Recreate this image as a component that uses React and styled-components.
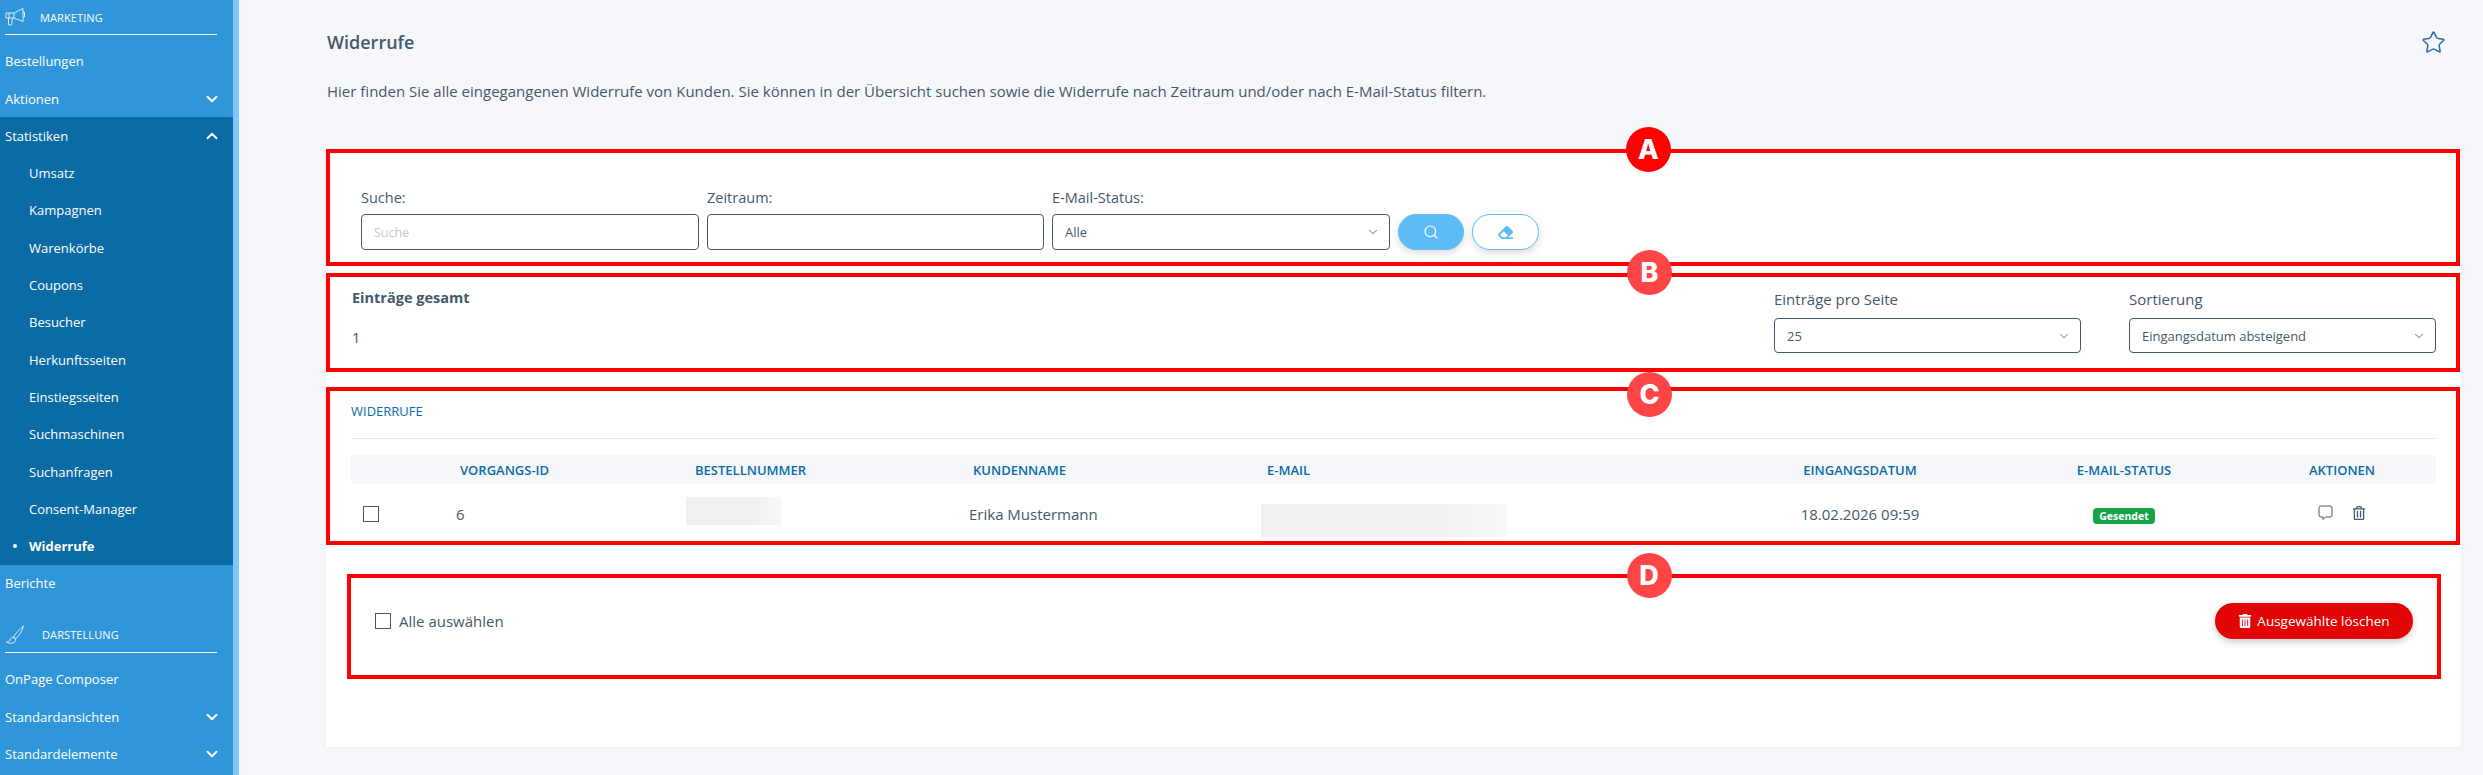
import React from 'react';
import styled, { createGlobalStyle } from 'styled-components';
import { ChevronDown, ChevronUp, Search, Star } from 'lucide-react';
import { FaEraser, FaRegTrashAlt, FaTrashAlt } from 'react-icons/fa';

const GlobalStyle = createGlobalStyle`
  html, body {
    margin: 0;
    height: 100%;
    overflow: hidden;
    background: #f5f7fb;
    color: #44596b;
    font-family: "Open Sans", "Noto Sans", sans-serif;
    font-size: 14px;
  }
  * { box-sizing: border-box; }
`;

const Shell = styled.div`
  display: flex;
  height: 775px;
  overflow: hidden;
`;

// Sidebar
const Sidebar = styled.nav`
  flex: 0 0 239px;
  height: 100%;
  overflow: hidden;
  background: #3096da;
  border-right: 6px solid #7fc8ff;
  color: #fff;
`;

const GroupHead = styled.div`
  display: flex;
  align-items: center;
  width: 212px;
  height: ${(p) => p.$height}px;
  margin: ${(p) => p.$top}px 0 7.6px 5px;
  border-bottom: 1px solid #fff;
  font-size: 11px;
  letter-spacing: 0.1px;
  span { margin-left: ${(p) => p.$gap}px; }
  svg { flex: none; }
`;

const NavRow = styled.div`
  display: flex;
  align-items: center;
  justify-content: space-between;
  height: 37.3px;
  padding: 0 12px 0 ${(p) => (p.$sub ? 29 : 5)}px;
  font-size: 13px;
  font-weight: ${(p) => (p.$current ? 700 : 400)};
  position: relative;
`;

const Bullet = styled.i`
  position: absolute;
  left: 13px;
  top: 50%;
  width: 4px;
  height: 4px;
  margin-top: -2px;
  border-radius: 50%;
  background: #fff;
`;

const ActiveBlock = styled.div`
  background: #0b6ba5;
`;

// Main area
const Main = styled.main`
  flex: 1;
  min-width: 0;
  padding: 0 22px 0 87px;
`;

const TitleRow = styled.div`
  display: flex;
  align-items: center;
  justify-content: space-between;
  height: 42px;
  margin-top: 21px;
  padding: 0 15px 0 1px;
  color: #356d9e;
`;

const Title = styled.h1`
  margin: 0;
  font-size: 18px;
  font-weight: 600;
  color: #44596b;
`;

const Intro = styled.p`
  margin: 18px 0 0;
  padding-left: 1px;
  font-size: 15px;
  line-height: 20px;
  height: 68px;
`;

const Card = styled.div`
  height: 598px;
  background: #fff;
  box-shadow: 0 1px 6px rgba(0, 0, 0, 0.03);
`;

const Marked = styled.section`
  position: relative;
  margin: ${(p) => p.$margin};
  border: 4px solid #f00;
`;

const Letter = styled.b`
  position: absolute;
  left: ${(p) => p.$left}px;
  top: ${(p) => p.$top}px;
  z-index: 2;
  display: flex;
  align-items: center;
  justify-content: center;
  width: 45px;
  height: 45px;
  border-radius: 50%;
  background: ${(p) => (p.$solid ? '#f00' : '#ff4545')};
  color: #fff;
  font-family: Inter, "Liberation Sans", sans-serif;
  font-size: 27px;
  font-weight: 800;
`;

const FilterBar = styled.div`
  display: flex;
  align-items: flex-end;
  gap: 8px;
  padding: 35px 0 12px 31px;
`;

const Field = styled.label`
  display: flex;
  flex-direction: column;
  width: ${(p) => p.$width}px;
`;

const FieldLabel = styled.span`
  height: 20px;
  margin-bottom: ${(p) => p.$gap}px;
  font-size: ${(p) => p.$size}px;
  line-height: 20px;
`;

const TextInput = styled.input`
  width: 100%;
  height: 36px;
  padding: 0 12px;
  border: 1px solid #44596b;
  border-radius: 4px;
  background: #fff;
  font: 12.5px "Open Sans", sans-serif;
  color: #44596b;
  outline: none;
  &::placeholder { color: #c3c8cc; opacity: 1; }
`;

const SelectWrap = styled.div`
  position: relative;
  height: ${(p) => p.$height}px;
  svg {
    position: absolute;
    right: 10px;
    top: 50%;
    margin-top: -7px;
    pointer-events: none;
  }
`;

const Select = styled.select`
  appearance: none;
  width: 100%;
  height: 100%;
  padding: 0 30px 0 12px;
  border: 1px solid #44596b;
  border-radius: 4px;
  background: #fff;
  font: 13px "Open Sans", sans-serif;
  color: #44596b;
  outline: none;
`;

const PillButton = styled.button`
  display: flex;
  align-items: center;
  justify-content: center;
  height: 36px;
  width: ${(p) => p.$width}px;
  border-radius: 18px;
  border: 1px solid #5dbcf8;
  background: ${(p) => (p.$outline ? '#fff' : '#5dbcf8')};
  color: ${(p) => (p.$outline ? '#5dbcf8' : '#fff')};
  box-shadow: 0 3px 7px rgba(0, 0, 0, 0.14);
  padding: 0;
`;

const SummaryBar = styled.div`
  display: flex;
  justify-content: space-between;
  height: 91px;
  padding: 0 20px 0 22px;
`;

const Total = styled.div`
  padding-top: 11px;
  strong {
    display: block;
    height: 20px;
    font-size: 14.5px;
    font-weight: 700;
    line-height: 20px;
  }
  p {
    margin: 20px 0 0;
    font-size: 14.5px;
    line-height: 20px;
  }
`;

const PageOptions = styled.div`
  display: flex;
  gap: 48px;
  padding-top: 12px;
`;

const TableHead = styled.h2`
  height: 48px;
  margin: 0 0 16px;
  padding-top: 10px;
  border-bottom: 1px solid #e6e8ee;
  color: #0b6ba5;
  font-size: 13px;
  font-weight: 400;
  line-height: 20px;
`;

const TableWrap = styled.div`
  padding: 0 20px 0 21px;
`;

const Table = styled.table`
  width: 100%;
  table-layout: fixed;
  border-collapse: collapse;
`;

const Th = styled.th`
  height: 29px;
  padding: 0 ${(p) => p.$right || 0}px 0 ${(p) => p.$inset || 0}px;
  background: #f5f7fb;
  color: #0b6ba5;
  font-size: 13px;
  font-weight: 600;
  text-align: ${(p) => p.$align || 'left'};
  text-transform: uppercase;
`;

const Td = styled.td`
  height: 57px;
  padding: 3px ${(p) => p.$right || 0}px 0 ${(p) => p.$inset || 0}px;
  font-size: 15px;
  text-align: ${(p) => p.$align || 'left'};
  vertical-align: middle;
`;

const Tick = styled.input.attrs({ type: 'checkbox' })`
  appearance: none;
  display: block;
  flex: none;
  width: 16px;
  height: 16px;
  margin: ${(p) => p.$margin || 0};
  border: 1px solid #44596b;
  background: #fff;
`;

const Redacted = styled.span`
  display: block;
  width: ${(p) => p.$width}px;
  height: ${(p) => p.$height}px;
  margin: ${(p) => p.$margin};
  background: linear-gradient(90deg, #eef0f2 0%, #eef0f2 70%, #f6f7f9 100%);
`;

const StatusTag = styled.span`
  display: inline-block;
  width: 62px;
  height: 16px;
  border-radius: 4px;
  background: #16a34a;
  color: #fff;
  font-size: 10.5px;
  font-weight: 700;
  line-height: 16px;
  text-align: center;
  vertical-align: middle;
`;

const RowActions = styled.div`
  display: flex;
  justify-content: center;
  align-items: center;
  gap: 19px;
  margin-top: -3px;
  color: #44596b;
`;

const BulkBar = styled.div`
  display: flex;
  align-items: center;
  justify-content: space-between;
  height: 97px;
  padding: 0 24px 11px 24px;
`;

const SelectAll = styled.label`
  display: flex;
  align-items: center;
  gap: 8px;
  font-size: 15px;
`;

const DeleteButton = styled.button`
  display: flex;
  align-items: center;
  justify-content: center;
  gap: 5px;
  width: 198px;
  height: 36px;
  border: 0;
  border-radius: 18px;
  background: #e10505;
  color: #fff;
  font: 13.5px "Open Sans", sans-serif;
  box-shadow: 0 3px 7px rgba(0, 0, 0, 0.2);
`;

const MegaphoneIcon = () => (
  <svg width="20" height="20" viewBox="0 0 20 20" fill="none" stroke="#fff" strokeWidth="0.8">
    <path d="M1 6h8l9-4.500v13L9 11H1z" />
    <path d="M3.500 11v7h3l1-7M18 5h1.500v5H18M4 6v5M9 6v5" />
  </svg>
);

const BrushIcon = () => (
  <svg width="20" height="20" viewBox="0 0 20 20" fill="none" stroke="#fff" strokeWidth="0.8">
    <path d="M18.500 1C15 4 11 8 8.500 12l2 2C14 11 17.500 6 18.500 1z" />
    <path d="M8.500 12c-3 .2-3.500 3-4 4-.4.8-2 1-3 1 1.500 1.600 5.500 1.500 7.500.5 1.400-.8 1.800-2.500 1.500-3.500z" />
  </svg>
);

const CommentIcon = () => (
  <svg width="15" height="16" viewBox="0 0 15 16" fill="none" stroke="currentColor" strokeWidth="1">
    <path d="M3 1h9a2 2 0 0 1 2 2v7a2 2 0 0 1-2 2H7.500L5 14.500V12H3a2 2 0 0 1-2-2V3a2 2 0 0 1 2-2z" />
  </svg>
);

const statsLinks = ['Umsatz', 'Kampagnen', 'Warenkörbe', 'Coupons', 'Besucher', 'Herkunftsseiten', 'Einstiegsseiten', 'Suchmaschinen', 'Suchanfragen', 'Consent-Manager'];

const Dropdown = ({ value, height }) => (
  <SelectWrap $height={height}>
    <Select defaultValue={value}>
      <option>{value}</option>
    </Select>
    <ChevronDown size={14} strokeWidth={1.5} />
  </SelectWrap>
);

const App = () => (
  <Shell>
    <GlobalStyle />
    <Sidebar>
      <GroupHead $height={35} $top={0} $gap={15}>
        <MegaphoneIcon />
        <span>MARKETING</span>
      </GroupHead>
      <NavRow>Bestellungen</NavRow>
      <NavRow>
        Aktionen
        <ChevronDown size={18} strokeWidth={2.5} />
      </NavRow>
      <ActiveBlock>
        <NavRow>
          Statistiken
          <ChevronUp size={18} strokeWidth={2.5} />
        </NavRow>
        {statsLinks.map((link) => (
          <NavRow $sub key={link}>{link}</NavRow>
        ))}
        <NavRow $sub $current>
          <Bullet />
          Widerrufe
        </NavRow>
      </ActiveBlock>
      <NavRow>Berichte</NavRow>
      <GroupHead $height={36} $top={15} $gap={17}>
        <BrushIcon />
        <span>DARSTELLUNG</span>
      </GroupHead>
      <NavRow>OnPage Composer</NavRow>
      <NavRow>
        Standardansichten
        <ChevronDown size={18} strokeWidth={2.5} />
      </NavRow>
      <NavRow>
        Standardelemente
        <ChevronDown size={18} strokeWidth={2.5} />
      </NavRow>
    </Sidebar>

    <Main>
      <TitleRow>
        <Title>Widerrufe</Title>
        <Star size={25} strokeWidth={1.5} />
      </TitleRow>
      <Intro>
        Hier finden Sie alle eingegangenen Widerrufe von Kunden. Sie können in der Übersicht suchen sowie die Widerrufe nach Zeitraum und/oder nach E-Mail-Status filtern.
      </Intro>

      <Card>
        <Marked $margin="0 1px 7px 0">
          <Letter $solid $left={1296} $top={-26.5}>A</Letter>
          <FilterBar>
            <Field $width={338}>
              <FieldLabel $size={14.5} $gap={6}>Suche:</FieldLabel>
              <TextInput placeholder="Suche" />
            </Field>
            <Field $width={337}>
              <FieldLabel $size={14.5} $gap={6}>Zeitraum:</FieldLabel>
              <TextInput />
            </Field>
            <Field $width={338}>
              <FieldLabel $size={14.5} $gap={6}>E-Mail-Status:</FieldLabel>
              <Dropdown value="Alle" height={36} />
            </Field>
            <PillButton $width={66}>
              <Search size={16} strokeWidth={1.75} />
            </PillButton>
            <PillButton $outline $width={67}>
              <FaEraser size={15} />
            </PillButton>
          </FilterBar>
        </Marked>

        <Marked $margin="0 1px 15px 0">
          <Letter $left={1297} $top={-27.5}>B</Letter>
          <SummaryBar>
            <Total>
              <strong>Einträge gesamt</strong>
              <p>1</p>
            </Total>
            <PageOptions>
              <Field $width={307}>
                <FieldLabel $size={15} $gap={9}>Einträge pro Seite</FieldLabel>
                <Dropdown value="25" height={35} />
              </Field>
              <Field $width={307}>
                <FieldLabel $size={15} $gap={9}>Sortierung</FieldLabel>
                <Dropdown value="Eingangsdatum absteigend" height={35} />
              </Field>
            </PageOptions>
          </SummaryBar>
        </Marked>

        <Marked $margin="0 1px 29px 0">
          <Letter $left={1297} $top={-19.5}>C</Letter>
          <TableWrap>
            <TableHead>WIDERRUFE</TableHead>
            <Table>
              <colgroup>
                <col style={{ width: 99 }} />
                <col style={{ width: 230 }} />
                <col style={{ width: 283 }} />
                <col style={{ width: 292 }} />
                <col style={{ width: 485 }} />
                <col style={{ width: 240 }} />
                <col style={{ width: 288 }} />
                <col style={{ width: 168 }} />
              </colgroup>
              <thead>
                <tr>
                  <Th />
                  <Th $inset={10}>Vorgangs-ID</Th>
                  <Th $inset={15}>Bestellnummer</Th>
                  <Th $inset={10}>Kundenname</Th>
                  <Th $inset={12}>E-Mail</Th>
                  <Th $align="center">Eingangsdatum</Th>
                  <Th $align="center">E-Mail-Status</Th>
                  <Th $align="center" $right={20}>Aktionen</Th>
                </tr>
              </thead>
              <tbody>
                <tr>
                  <Td><Tick $margin="0 0 0 12px" /></Td>
                  <Td $inset={6}>6</Td>
                  <Td $inset={6}><Redacted $width={95} $height={28} $margin="0 0 7px" /></Td>
                  <Td $inset={6}>Erika Mustermann</Td>
                  <Td $inset={6}><Redacted $width={245} $height={33} $margin="12px 0 0" /></Td>
                  <Td $align="center">18.02.2026 09:59</Td>
                  <Td $align="center"><StatusTag>Gesendet</StatusTag></Td>
                  <Td $align="center" $right={20}>
                    <RowActions>
                      <CommentIcon />
                      <FaRegTrashAlt size={14} />
                    </RowActions>
                  </Td>
                </tr>
              </tbody>
            </Table>
          </TableWrap>
        </Marked>

        <Marked $margin="0 20px 0 21px">
          <Letter $left={1275.5} $top={-25.5}>D</Letter>
          <BulkBar>
            <SelectAll>
              <Tick />
              Alle auswählen
            </SelectAll>
            <DeleteButton>
              <FaTrashAlt size={14} />
              Ausgewählte löschen
            </DeleteButton>
          </BulkBar>
        </Marked>
      </Card>
    </Main>
  </Shell>
);

export default App;
